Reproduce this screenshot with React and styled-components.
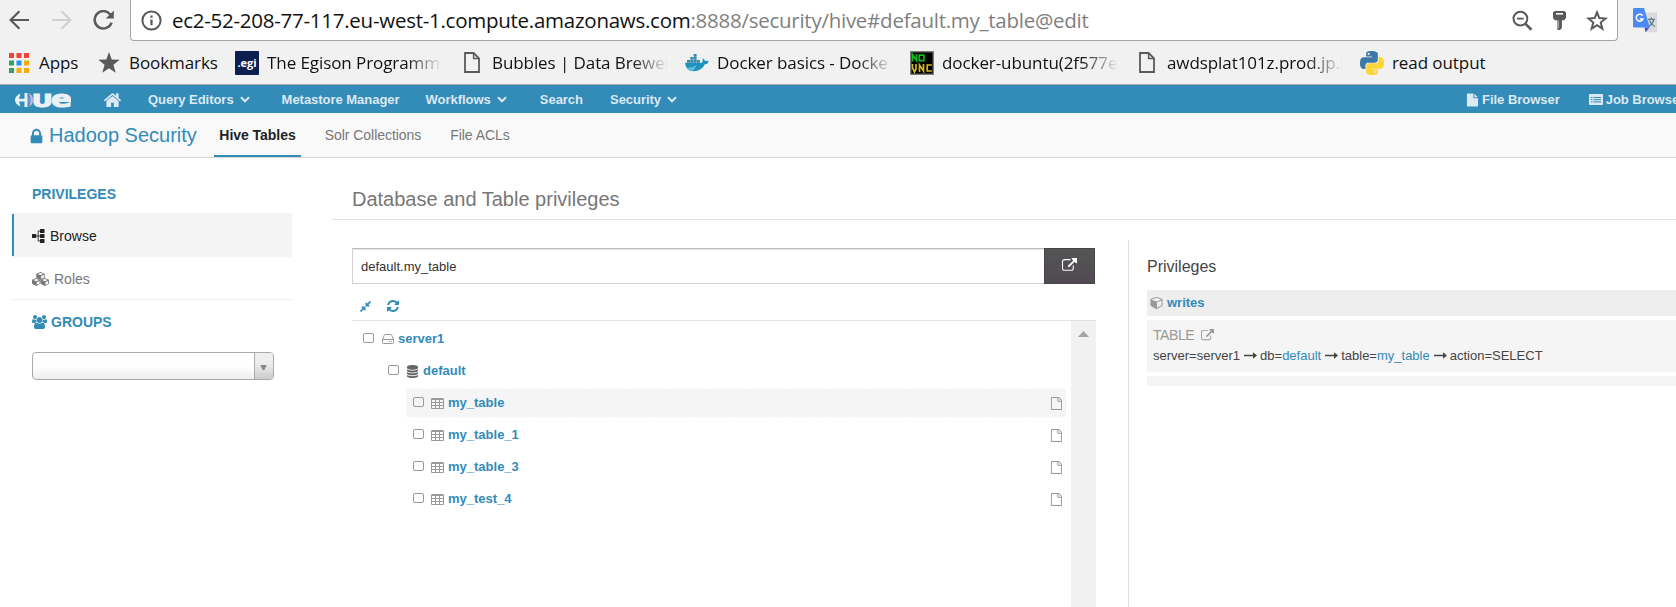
import React from "react";
import styled, { createGlobalStyle } from "styled-components";

const BLUE = "#338bb8";
const ARIAL = '"Liberation Sans", Arial, sans-serif';
const UI = '"Open Sans", "Noto Sans", sans-serif';

const Global = createGlobalStyle`
  * { box-sizing: border-box; }
  html, body { margin: 0; padding: 0; height: 100%; overflow: hidden; background: #fff; }
  svg { display: block; flex: none; }
  a { text-decoration: none; }
`;

/* ---------- icons ---------- */

const PATHS = {
  home: "M1472 992v480q0 26-19 45t-45 19h-384v-384h-256v384h-384q-26 0-45-19t-19-45v-480q0-1 .5-3t.5-3l575-474 575 474q1 2 1 6zm223-69l-62 74q-8 9-21 11h-3q-13 0-21-7l-692-577-692 577q-12 8-24 7-13-2-21-11l-62-74q-8-10-7-23.5t11-21.5l719-599q32-26 76-26t76 26l244 204v-195q0-14 9-23t23-9h192q14 0 23 9t9 23v408l219 182q10 8 11 21.5t-7 23.5z",
  lock: "M640 768h512v-192q0-106-75-181t-181-75-181 75-75 181v192zm832 96v576q0 40-28 68t-68 28h-960q-40 0-68-28t-28-68v-576q0-40 28-68t68-28h32v-192q0-184 132-316t316-132 316 132 132 316v192h32q40 0 68 28t28 68z",
  external: "M1408 928v320q0 119-84.5 203.5t-203.5 84.5h-832q-119 0-203.5-84.5t-84.5-203.5v-832q0-119 84.5-203.5t203.5-84.5h704q14 0 23 9t9 23v64q0 14-9 23t-23 9h-704q-66 0-113 47t-47 113v832q0 66 47 113t113 47h832q66 0 113-47t47-113v-320q0-14 9-23t23-9h64q14 0 23 9t9 23zm384-864v512q0 26-19 45t-45 19-45-19l-176-176-652 652q-10 10-23 10t-23-10l-114-114q-10-10-10-23t10-23l652-652-176-176q-19-19-19-45t19-45 45-19h512q26 0 45 19t19 45z",
  refresh: "M1639 1056q0 5-1 7-64 268-268 434.5t-478 166.5q-146 0-282.5-55t-243.5-157l-129 129q-19 19-45 19t-45-19-19-45v-448q0-26 19-45t45-19h448q26 0 45 19t19 45-19 45l-137 137q71 66 161 102t187 36q134 0 250-65t186-179q11-17 53-117 8-23 30-23h192q13 0 22.5 9.5t9.5 22.5zm25-800v448q0 26-19 45t-45 19h-448q-26 0-45-19t-19-45 19-45l138-138q-148-137-349-137-134 0-250 65t-186 179q-11 17-53 117-8 23-30 23h-199q-13 0-22.5-9.5t-9.5-22.5v-7q65-268 270-434.5t480-166.5q146 0 284 55.5t245 156.5l130-129q19-19 45-19t45 19 19 45z",
  compress: "M896 960v448q0 26-19 45t-45 19-45-19l-144-144-332 332q-10 10-23 10t-23-10l-114-114q-10-10-10-23t10-23l332-332-144-144q-19-19-19-45t19-45 45-19h448q26 0 45 19t19 45zm755-672q0 13-10 23l-332 332 144 144q19 19 19 45t-19 45-45 19h-448q-26 0-45-19t-19-45v-448q0-26 19-45t45-19 45 19l144 144 332-332q10-10 23-10t23 10l114 114q10 10 10 23z",
  database: "M896 768q237 0 443-43t325-127v170q0 69-103 128t-280 93.5-385 34.5-385-34.5-280-93.5-103-128v-170q119 84 325 127t443 43zm0 768q237 0 443-43t325-127v170q0 69-103 128t-280 93.5-385 34.5-385-34.5-280-93.5-103-128v-170q119 84 325 127t443 43zm0-384q237 0 443-43t325-127v170q0 69-103 128t-280 93.5-385 34.5-385-34.5-280-93.5-103-128v-170q119 84 325 127t443 43zm0-1152q208 0 385 34.5t280 93.5 103 128v128q0 69-103 128t-280 93.5-385 34.5-385-34.5-280-93.5-103-128v-128q0-69 103-128t280-93.5 385-34.5z",
  file: "M1152 512v-472q22 14 36 28l408 408q14 14 28 36h-472zm-128 32q0 40 28 68t68 28h544v1056q0 40-28 68t-68 28h-1344q-40 0-68-28t-28-68v-1600q0-40 28-68t68-28h800v544z",
  fileO: "M1596 380q28 28 48 76t20 88v1152q0 40-28 68t-68 28h-1344q-40 0-68-28t-28-68v-1600q0-40 28-68t68-28h896q40 0 88 20t76 48zm-444-244v376h376q-10-29-22-41l-313-313q-12-12-41-22zm384 1528v-1024h-416q-40 0-68-28t-28-68v-416h-768v1536h1280z",
  cube: "M896 1629l640-349v-636l-640 233v752zm-64-865l698-254-698-254-698 254zm832-252v768q0 35-18 65t-49 47l-704 384q-28 16-61 16t-61-16l-704-384q-31-17-49-47t-18-65v-768q0-40 23-73t61-47l704-256q22-8 44-8t44 8l704 256q38 14 61 47t23 73z",
  users: "M593 896q-162 5-265 128h-134q-82 0-138-40.5t-56-118.5q0-353 124-353 6 0 43.5 21t97.5 42.5 119 21.5q67 0 133-23-5 37-5 66 0 139 81 256zm1071 637q0 120-73 189.5t-194 69.5h-874q-121 0-194-69.5t-73-189.5q0-53 3.5-103.5t14-109 26.5-108.5 43-97.5 62-81 85.5-53.5 111.5-20q10 0 43 21.5t73 48 107 48 135 21.5 135-21.5 107-48 73-48 43-21.5q61 0 111.5 20t85.5 53.5 62 81 43 97.5 26.5 108.5 14 109 3.5 103.5zm-1024-1277q0 106-75 181t-181 75-181-75-75-181 75-181 181-75 181 75 75 181zm704 384q0 159-112.5 271.5t-271.5 112.5-271.5-112.5-112.5-271.5 112.5-271.5 271.5-112.5 271.5 112.5 112.5 271.5zm576 225q0 78-56 118.5t-138 40.5h-134q-103-123-265-128 81-117 81-256 0-29-5-66 66 23 133 23 59 0 119-21.5t97.5-42.5 43.5-21q124 0 124 353zm-128-609q0 106-75 181t-181 75-181-75-75-181 75-181 181-75 181 75 75 181z",
};

const Glyph = ({ name, w, h = w, box = "0 0 1792 1792", color = "currentColor" }) => (
  <svg width={w} height={h} viewBox={box} fill={color}><path d={PATHS[name]} /></svg>
);

const BackArrow = ({ color }) => (
  <svg width="21" height="20" viewBox="0 0 21 20" fill="none" stroke={color} strokeWidth="2.2">
    <path d="M1.8 10H20M10.4 1.2L1.6 10l8.8 8.8" />
  </svg>
);
const ForwardArrow = ({ color }) => (
  <svg width="21" height="20" viewBox="0 0 21 20" fill="none" stroke={color} strokeWidth="2.2">
    <path d="M1 10h18.2M10.6 1.2l8.8 8.8-8.8 8.8" />
  </svg>
);
const Reload = () => (
  <svg width="22" height="20" viewBox="0 0 22 20" fill="none">
    <path d="M18.6 12.6A8.7 8.7 0 1 1 17.2 4.4" stroke="#5a5a5a" strokeWidth="2.5" />
    <path d="M20.8.6v8h-8z" fill="#5a5a5a" />
  </svg>
);
const InfoIcon = () => (
  <svg width="21" height="21" viewBox="0 0 21 21" fill="none" stroke="#5a5a5a">
    <circle cx="10.5" cy="10.5" r="9.1" strokeWidth="2" />
    <path d="M10.5 9.4v5.8M10.5 5.6v2.2" strokeWidth="2.2" />
  </svg>
);
const ZoomOut = () => (
  <svg width="21" height="21" viewBox="0 0 21 21" fill="none" stroke="#5a5a5a">
    <circle cx="8.4" cy="8.6" r="6.9" strokeWidth="2" />
    <path d="M5 8.6h6.8" strokeWidth="1.8" />
    <path d="M13.2 13.600l6.300 6.200" strokeWidth="2.6" />
  </svg>
);
const KeyIcon = () => (
  <svg width="13" height="19" viewBox="0 0 13 19">
    <path d="M1.5 0h10L13 1.5V7l-1.8 2.2H8.9V17L7 19H4.4V9.2H1.8L0 7V1.5z" fill="#5a5a5a" />
    <path d="M3 2h7v1.6H3z" fill="#fff" />
    <path d="M5.6 9.5v8" stroke="#bbb" strokeWidth=".8" />
  </svg>
);
const StarOutline = () => (
  <svg width="22" height="21" viewBox="0 0 22 21" fill="none" stroke="#5a5a5a" strokeWidth="2">
    <path d="M11 2.300l2.300 5.800 6.300.4-4.900 4 1.700 6.200L11 15.200l-5.400 3.500 1.700-6.200-4.900-4 6.300-.4z" />
  </svg>
);
const StarSolid = () => (
  <svg width="22" height="21" viewBox="0 0 22 21" fill="#5a5a5a">
    <path d="M11 0l2.700 7.400 8.100.3-6.400 5 2.300 8.100L11 16.200l-6.700 4.600 2.300-8.100-6.400-5 8.100-.3z" />
  </svg>
);
const Translate = () => (
  <svg width="24" height="25" viewBox="0 0 24 25">
    <path d="M9 4.500h15v19.700H12z" fill="#d9dadb" />
    <path d="M11.500 19.500h5l-4 4.800z" fill="#3a55c8" />
    <path d="M0 1.200Q0 0 1.200 0H11l5.800 19.500H1.200Q0 19.500 0 18.300z" fill="#4a8af4" />
    <path d="M9.700 7.700A3.500 3.500 0 1 0 10 11H6.800" fill="none" stroke="#fff" strokeWidth="1.500" />
    <path d="M15 11.300h7M18.300 9.500v2M16 18.500q4-2.800 4.800-7M16.500 12.500q1.500 4 5.300 6" fill="none" stroke="#637a86" strokeWidth="1.300" />
  </svg>
);
const AppsGrid = () => {
  const colors = ["#f44336", "#f44336", "#f44336", "#34a05b", "#2196f3", "#f9ab0c", "#34a05b", "#f9ab0c", "#f9ab0c"];
  return (
    <svg width="20" height="20" viewBox="0 0 20 20">
      {colors.map((c, i) => (
        <rect key={i} x={(i % 3) * 7.5} y={Math.floor(i / 3) * 7.5} width="5" height="5" fill={c} />
      ))}
    </svg>
  );
};
const PageIcon = () => (
  <svg width="16" height="21" viewBox="0 0 16 21" fill="none" stroke="#5a5a5a" strokeWidth="1.800">
    <path d="M1 1h8.600L15 6.400V20H1z" />
    <path d="M9.600 1v5.400H15" strokeWidth="1.500" />
  </svg>
);
const Docker = () => (
  <svg width="24" height="18" viewBox="0 0 24 18">
    <path d="M0 8.700h17.200q1-2.300.4-4.500 2 .8 2.400 2.900 2-.6 3.800.3-1 2.600-4 2.800Q17 17 8.500 17.200 .6 17.200 0 8.700z" fill="#1f93bd" />
    <path d="M1.200 13.500q6 .8 10.600-2.500-2 4.200-4.600 6-4-.4-6-3.500z" fill="#5fc0dc" />
    <path d="M2 6h3v2.700H2zM5.300 6h3v2.700h-3zM8.600 6h3v2.700h-3zM11.900 6h3v2.700h-3zM5.300 3h3v2.700h-3zM8.600 3h3v2.700h-3zM8.600 0h3v2.700h-3z" fill="#3a89a8" />
  </svg>
);
const NoVnc = () => (
  <svg width="24" height="24" viewBox="0 0 24 24" fill="none">
    <rect x=".7" y=".7" width="22.600" height="22.600" fill="#000" stroke="#7b7b7b" strokeWidth="1.400" />
    <path d="M2.500 10.500V3.500l4 6v-6.500M9.300 4.200h4.600v5.500H9.300z" stroke="#0bbd18" strokeWidth="1.700" />
    <path d="M2.500 13v4l2 4 1.500-3v-5M9.500 21v-7l4 6v-7M21.800 14h-4.600v6h4.600" stroke="#cfb91c" strokeWidth="1.700" />
  </svg>
);
const PY = "M14.25.18l.9.2.73.26.59.3.45.32.34.34.25.34.16.33.1.3.04.26.02.2-.01.13V8.500l-.05.63-.13.55-.21.46-.26.38-.3.31-.33.25-.35.19-.35.14-.33.1-.3.07-.26.04-.21.02H8.770l-.69.05-.59.14-.5.22-.41.27-.33.32-.27.35-.2.36-.15.37-.1.35-.07.32-.04.27-.02.21v3.060H3.170l-.21-.03-.28-.07-.32-.12-.35-.18-.36-.26-.36-.36-.35-.46-.32-.59-.28-.73-.21-.88-.14-1.050-.05-1.230.06-1.220.16-1.040.24-.87.32-.71.36-.57.4-.44.42-.33.42-.24.4-.16.36-.1.32-.05.24-.01h.16l.06.01h8.160v-.83H6.180l-.01-2.750-.02-.37.05-.34.11-.31.17-.28.25-.26.31-.23.38-.2.44-.18.51-.15.58-.12.64-.1.71-.06.77-.04.84-.02 1.270.05zm-6.300 1.980l-.23.33-.08.41.08.41.23.34.33.22.41.09.41-.09.33-.22.23-.34.08-.41-.08-.41-.23-.33-.33-.22-.41-.09-.41.09z";
const Python = () => (
  <svg width="24" height="24" viewBox="0 0 24 24">
    <path d={PY} fill="#3c78a9" />
    <path d={PY} fill="#fdd534" transform="rotate(180 12 12)" />
  </svg>
);
const HueLogo = () => (
  <svg width="56" height="16" viewBox="0 0 56 16">
    <path d="M5.500 1.500Q0 4 0 8t5.500 6.500L4 9.400h5.500v5.600h3V1h-3v5.800H4z" fill="#eaf1f5" />
    <path d="M13.500 1q4.500 2 4.500 7t-4.500 7q2-3.500 2-7t-2-7z" fill="#c3b3e6" />
    <path d="M13.600 3.500q2 4.500 0 9.500z" fill="#b9a6e0" />
    <g fontFamily="DejaVu Sans" fill="#eaf1f5" stroke="#eaf1f5" strokeWidth="1.100">
      <text x="16.800" y="14.600" textLength="21" lengthAdjust="spacingAndGlyphs" fontSize="18">U</text>
      <text x="36" y="14.600" textLength="21" lengthAdjust="spacingAndGlyphs" fontSize="23.500">e</text>
    </g>
  </svg>
);
const Chevron = () => (
  <svg width="10" height="7" viewBox="0 0 10 7" fill="none" stroke="currentColor" strokeWidth="2">
    <path d="M1 1.300l4 4 4-4" />
  </svg>
);
const ListAlt = () => (
  <svg width="14" height="11" viewBox="0 0 14 11">
    <path d="M1 0h12q1 0 1 1v9q0 1-1 1H1q-1 0-1-1V1q0-1 1-1z" fill="#dbe9f2" />
    <path d="M2 3.500h1.500M4.500 3.500H12M2 5.700h1.500M4.500 5.700H12M2 7.900h1.500M4.500 7.900H12" stroke={BLUE} strokeWidth="1" />
  </svg>
);
const SitemapIcon = () => (
  <svg width="13" height="14" viewBox="0 0 13 14" fill="currentColor">
    <rect x="0" y="5" width="4.200" height="4" rx=".6" />
    <rect x="8" y="0" width="4.500" height="4" rx=".6" />
    <rect x="8" y="5" width="4.500" height="4" rx=".6" />
    <rect x="8" y="10" width="4.500" height="4" rx=".6" />
    <path d="M4 7h4M8 2H6.200v10H8" fill="none" stroke="currentColor" strokeWidth=".9" />
  </svg>
);
const OneCube = ({ x, y }) => (
  <g transform={`translate(${x} ${y})`}>
    <path d="M4.200 0l4.200 1.700v4.100L4.200 8 0 5.800V1.700z" />
    <path d="M4.200 .9l2.900 1.200-2.900 1.200-2.900-1.200zM4.800 4.200l2.800-1.200v2.400L4.800 6.800z" fill="#fff" />
  </g>
);
const CubesIcon = () => (
  <svg width="17" height="14" viewBox="0 0 17 14" fill="currentColor">
    <OneCube x={4.300} y={0} /><OneCube x={0} y={6} /><OneCube x={8.600} y={6} />
  </svg>
);
const HddIcon = () => (
  <svg width="12" height="10" viewBox="0 0 12 10" fill="none" stroke="#999" strokeWidth="1">
    <path d="M.5 5.500L2.300 1.200Q2.500.5 3.200.5h5.600q.7 0 .9.700l1.800 4.300v3.200q0 .8-.8.800H1.300q-.8 0-.8-.8zM.5 5.500h11" />
    <path d="M7 7.500h1M9 7.500h1" />
  </svg>
);
const TableIcon = () => (
  <svg width="13" height="11" viewBox="0 0 13 11" fill="none" stroke="#999" strokeWidth="1">
    <path d="M.5 1h12" strokeWidth="2" />
    <path d="M.5 1v9.500h12V1M.5 4.500h12M.5 7.500h12M4.500 1v9.500M8.500 1v9.500" />
  </svg>
);
const LongArrow = () => (
  <svg width="13" height="7" viewBox="0 0 13 7" fill="#444">
    <path d="M0 2.800h9V.3L13 3.500 9 6.700V4.200H0z" />
  </svg>
);

/* ---------- browser chrome ---------- */

const Page = styled.div`
  display: flex; flex-direction: column;
  width: 1676px; height: 607px; overflow: hidden;
  font-family: ${ARIAL}; color: #444; background: #fff;
`;
const Chrome = styled.header`
  flex: none; height: 85px; background: #f1f1f1;
  border-bottom: 1px solid #a9a9a9;
  font-family: ${UI}; color: #111;
`;
const AddressRow = styled.div`
  display: flex; height: 41px; padding-left: 9px;
`;
const NavButtons = styled.div`
  display: flex; align-items: center; gap: 21px; width: 121px; height: 39px;
`;
const Omnibox = styled.div`
  display: flex; align-items: center;
  width: 1488px; height: 41px; padding: 0 9px 0 10px;
  background: #fff; border: 1px solid #a6a6a6; border-top: 0; border-radius: 0 0 4px 4px;
`;
const Url = styled.div`
  flex: 1; margin-left: 10px; font-size: 20.5px; line-height: 38px; white-space: nowrap; letter-spacing: -0.26px;
  span { color: #808080; }
`;
const OmniIcons = styled.div`
  display: flex; align-items: center; gap: 20px;
`;
const Extension = styled.div`
  margin: 8px 0 0 15px;
`;
const BookmarkBar = styled.nav`
  display: flex; align-items: center; height: 43px; padding-left: 9px;
`;
const Bookmark = styled.a`
  display: flex; align-items: center; gap: ${(p) => p.$gap || 8}px;
  margin-right: ${(p) => p.$after || 17}px; color: #111;
`;
const BookmarkText = styled.span`
  width: ${(p) => p.$w}px; overflow: hidden; white-space: nowrap;
  font-size: 17px; line-height: 26px; letter-spacing: -0.08px;
  ${(p) => p.$fade && "mask-image: linear-gradient(90deg, #000 calc(100% - 36px), transparent);"}
`;
const EgiIcon = styled.span`
  display: flex; align-items: center; justify-content: center;
  width: 24px; height: 24px; background: #0c1f4e; border-radius: 1px;
  color: #fff; font: bold 11px/24px ${UI};
`;

/* ---------- hue navigation ---------- */

const HueBar = styled.nav`
  display: flex; align-items: center; flex: none;
  height: 28px; padding: 1px 0 0 15px; background: ${BLUE};
  color: #dbe9f2; font-size: 13px; font-weight: bold; white-space: nowrap; letter-spacing: -0.03px;
`;
const MenuItem = styled.a`
  display: flex; align-items: center; gap: ${(p) => p.$gap || 6}px;
  margin-left: ${(p) => p.$left}px; color: #dbe9f2; line-height: 28px;
`;
const SubBar = styled.nav`
  display: flex; flex: none; height: 45px; padding-left: 30px;
  background: #f9f9f9; border-bottom: 1px solid #d9d9d9;
`;
const AppTitle = styled.div`
  display: flex; align-items: center; gap: 6px; width: 184px; padding-top: 1px;
  color: ${BLUE}; font-size: 20px; white-space: nowrap;
`;
const Tab = styled.a`
  display: flex; align-items: center; justify-content: center;
  width: ${(p) => p.$w}px; height: 44px; margin-right: ${(p) => p.$after || 0}px; padding-top: 2px;
  font-size: 14px; letter-spacing: -0.04px; white-space: nowrap;
  color: ${(p) => (p.$active ? "#222" : "#777")};
  font-weight: ${(p) => (p.$active ? "bold" : "normal")};
  border-bottom: 2px solid ${(p) => (p.$active ? BLUE : "transparent")};
`;

/* ---------- body ---------- */

const Body = styled.div`
  display: flex; flex: 1; min-height: 0;
`;
const Sidebar = styled.aside`
  width: 280px; margin-left: 12px; padding-top: 16px; font-size: 14px;
`;
const SideHeading = styled.div`
  display: flex; align-items: center; gap: 4px; height: ${(p) => p.$h}px; padding: 1px 0 0 20px;
  color: ${BLUE}; font-weight: bold; font-size: 14px;
`;
const SideItem = styled.a`
  display: flex; align-items: center; gap: ${(p) => p.$gap}px;
  height: ${(p) => (p.$active ? 44 : 43)}px; padding: 1px 0 0 20px;
  color: ${(p) => (p.$active ? "#222" : "#777")};
  background: ${(p) => (p.$active ? `linear-gradient(${BLUE}, ${BLUE}) 0 1px / 2px 42px no-repeat #f4f4f4` : "#fff")};
  border-bottom: ${(p) => (p.$active ? "0" : "1px solid #f1f1f1")};
`;
const Select = styled.div`
  display: flex; justify-content: flex-end;
  width: 242px; height: 28px; margin: 10px 0 0 20px;
  border: 1px solid #aaa; border-radius: 4px; overflow: hidden;
  background: linear-gradient(#fff 50%, #eee);
`;
const SelectArrow = styled.div`
  display: flex; align-items: center; justify-content: center;
  width: 19px; padding: 3px 1px 0 0; border-left: 1px solid #aaa;
  background: linear-gradient(#eee 40%, #ccc);
`;
const Main = styled.main`
  display: flex; flex-direction: column; flex: 1; min-width: 0; margin-left: 40px;
`;
const Heading = styled.h1`
  flex: none; height: 62px; margin: 0; padding: 29px 0 0 20px;
  border-bottom: 1px solid #e3e3e3;
  font-size: 20px; line-height: 24px; font-weight: normal; color: #777;
`;
const Columns = styled.div`
  display: flex; flex: 1; min-height: 0; padding-top: 20px;
`;
const Browser = styled.section`
  display: flex; flex-direction: column; width: 744px; margin-left: 20px; padding-top: 8px;
`;
const PathRow = styled.div`
  display: flex; flex: none; height: 36px; width: 743px;
`;
const PathInput = styled.div`
  flex: 1; padding-left: 8px; border: 1px solid #d2d2d2; border-top-color: #bbb; border-right: 0;
  box-shadow: inset 0 1px 1px rgba(0, 0, 0, 0.1);
  color: #333; font-size: 13px; line-height: 36px;
`;
const OpenButton = styled.button`
  display: flex; align-items: center; justify-content: center;
  width: 51px; padding: 0 0 2px; border: 1px solid #48444a;
  background: linear-gradient(#555, #504a52); color: #fff;
`;
const TreeTools = styled.div`
  display: flex; align-items: center; gap: 14px; flex: none;
  height: 37px; padding: 8px 0 0 7px; color: ${BLUE};
  border-bottom: 1px solid #e3e3e3;
`;
const TreePane = styled.div`
  display: flex; justify-content: space-between; flex: 1; min-height: 0;
`;
const Tree = styled.div`
  width: 715px; padding-top: 3px;
`;
const TreeRow = styled.div`
  display: flex; align-items: center;
  height: 30px; margin: 0 0 2px ${(p) => p.$indent}px; padding: 0 4px 0 6px;
  border: 1px dashed ${(p) => (p.$selected ? "#fff" : "transparent")}; border-radius: 3px;
  background: ${(p) => (p.$selected ? "#f5f5f5" : "transparent")};
`;
const Checkbox = styled.span`
  width: 11px; height: 10px; border: 1px solid #999; border-radius: 2px; margin: 0 7px 2px 0;
`;
const NodeName = styled.a`
  flex: 1; margin-left: 4px; color: ${BLUE}; font-size: 13px; font-weight: bold; line-height: 20px;
`;
const IconSlot = styled.span`
  display: flex; justify-content: center; width: ${(p) => p.$w}px; color: #666;
`;
const ScrollTrack = styled.div`
  display: flex; justify-content: center; width: 25px; padding-top: 10px; background: #f1f1f1;
`;
const Details = styled.section`
  flex: 1; margin-left: 32px; padding: 17px 0 0 18px; border-left: 1px solid #dfdfdf;
`;
const DetailsTitle = styled.h2`
  margin: 0 0 13px; font-size: 16px; line-height: 20px; font-weight: normal; color: #444;
`;
const RoleRow = styled.div`
  display: flex; align-items: center; gap: 4px; height: 26px; padding: 0 0 1px 3px;
  background: #eee; color: #999;
`;
const RoleName = styled.a`
  color: ${BLUE}; font-size: 13px; font-weight: bold;
`;
const PrivilegeBox = styled.div`
  height: ${(p) => p.$h}px; margin-top: 4px; padding: ${(p) => (p.$h > 20 ? "5px 0 0 6px" : 0)};
  background: #f5f5f5; font-size: 13px;
`;
const KindLine = styled.div`
  display: flex; align-items: center; gap: 7px; height: 20px; font-size: 14px; color: #999; letter-spacing: -0.4px;
`;
const PathLine = styled.div`
  display: flex; align-items: center; height: 20px; color: #444; white-space: nowrap;
  a { color: ${BLUE}; }
  svg { margin: 1px 3px 0 4px; }
`;

const TABLES = ["my_table", "my_table_1", "my_table_3", "my_test_4"];

export default function App() {
  return (
    <Page>
      <Global />
      <Chrome>
        <AddressRow>
          <NavButtons>
            <BackArrow color="#5a5a5a" />
            <ForwardArrow color="#d0d0d0" />
            <Reload />
          </NavButtons>
          <Omnibox>
            <InfoIcon />
            <Url>ec2-52-208-77-117.eu-west-1.compute.amazonaws.com<span>:8888/security/hive#default.my_table@edit</span></Url>
            <OmniIcons><ZoomOut /><KeyIcon /><StarOutline /></OmniIcons>
          </Omnibox>
          <Extension><Translate /></Extension>
        </AddressRow>
        <BookmarkBar>
          <Bookmark $gap={10} $after={18}><AppsGrid /><BookmarkText $w={41}>Apps</BookmarkText></Bookmark>
          <Bookmark $gap={9} $after={16}><StarSolid /><BookmarkText $w={90}>Bookmarks</BookmarkText></Bookmark>
          <Bookmark $after={22}><EgiIcon>.egi</EgiIcon><BookmarkText $w={175} $fade>The Egison Programm</BookmarkText></Bookmark>
          <Bookmark $gap={12} $after={17}><PageIcon /><BookmarkText $w={176} $fade>Bubbles | Data Brewer</BookmarkText></Bookmark>
          <Bookmark $after={17}><Docker /><BookmarkText $w={176} $fade>Docker basics - Docke</BookmarkText></Bookmark>
          <Bookmark $after={21}><NoVnc /><BookmarkText $w={176} $fade>docker-ubuntu(2f577e</BookmarkText></Bookmark>
          <Bookmark $gap={12} $after={17}><PageIcon /><BookmarkText $w={176} $fade>awdsplat101z.prod.jp.l</BookmarkText></Bookmark>
          <Bookmark><Python /><BookmarkText $w={110}>read output</BookmarkText></Bookmark>
        </BookmarkBar>
      </Chrome>

      <HueBar>
        <HueLogo />
        <MenuItem $left={32}><Glyph name="home" w={19} h={18} box="0 60 1792 1650" /></MenuItem>
        <MenuItem $left={26}>Query Editors <Chevron /></MenuItem>
        <MenuItem $left={32}>Metastore Manager</MenuItem>
        <MenuItem $left={26}>Workflows <Chevron /></MenuItem>
        <MenuItem $left={33}>Search</MenuItem>
        <MenuItem $left={27}>Security <Chevron /></MenuItem>
        <MenuItem $left={789} $gap={3}><Glyph name="file" w={13} h={14} /> File Browser</MenuItem>
        <MenuItem $left={29} $gap={3}><ListAlt /> Job Browser</MenuItem>
      </HueBar>

      <SubBar>
        <AppTitle><Glyph name="lock" w={13} h={16} box="256 128 1280 1408" /> Hadoop Security</AppTitle>
        <Tab $w={87} $after={10} $active>Hive Tables</Tab>
        <Tab $w={124}>Solr Collections</Tab>
        <Tab $w={90}>File ACLs</Tab>
      </SubBar>

      <Body>
        <Sidebar>
          <SideHeading $h={39}>PRIVILEGES</SideHeading>
          <SideItem $active $gap={5}><SitemapIcon /> Browse</SideItem>
          <SideItem $gap={5}><CubesIcon /> Roles</SideItem>
          <SideHeading $h={42}><Glyph name="users" w={15} h={14} box="0 0 1920 1792" /> GROUPS</SideHeading>
          <Select>
            <SelectArrow>
              <svg width="7" height="5" viewBox="0 0 7 5" fill="#888"><path d="M.3 0h6.400L4.300 5H2.700z" /></svg>
            </SelectArrow>
          </Select>
        </Sidebar>
        <Main>
          <Heading>Database and Table privileges</Heading>
          <Columns>
            <Browser>
              <PathRow>
                <PathInput>default.my_table</PathInput>
                <OpenButton><Glyph name="external" w={15} h={15} /></OpenButton>
              </PathRow>
              <TreeTools>
                <Glyph name="compress" w={13} />
                <Glyph name="refresh" w={14} />
              </TreeTools>
              <TreePane>
                <Tree>
                  <TreeRow $indent={4}><Checkbox /><IconSlot $w={13}><HddIcon /></IconSlot><NodeName>server1</NodeName></TreeRow>
                  <TreeRow $indent={29}><Checkbox /><IconSlot $w={13}><Glyph name="database" w={13} /></IconSlot><NodeName>default</NodeName></TreeRow>
                  {TABLES.map((t, i) => (
                    <TreeRow key={t} $indent={54} $selected={i === 0}>
                      <Checkbox /><TableIcon /><NodeName>{t}</NodeName>
                      <Glyph name="fileO" w={12} h={13} box="0 0 1664 1792" color="#999" />
                    </TreeRow>
                  ))}
                </Tree>
                <ScrollTrack>
                  <svg width="11" height="6" viewBox="0 0 11 6" fill="#a3a3a3"><path d="M5.500 0L11 6H0z" /></svg>
                </ScrollTrack>
              </TreePane>
            </Browser>
            <Details>
              <DetailsTitle>Privileges</DetailsTitle>
              <RoleRow><Glyph name="cube" w={13} box="0 0 1664 1792" /><RoleName>writes</RoleName></RoleRow>
              <PrivilegeBox $h={52}>
                <KindLine>TABLE <Glyph name="external" w={13} /></KindLine>
                <PathLine>
                  server=server1<LongArrow />db=<a>default</a><LongArrow />table=<a>my_table</a><LongArrow />action=SELECT
                </PathLine>
              </PrivilegeBox>
              <PrivilegeBox $h={10} />
            </Details>
          </Columns>
        </Main>
      </Body>
    </Page>
  );
}
